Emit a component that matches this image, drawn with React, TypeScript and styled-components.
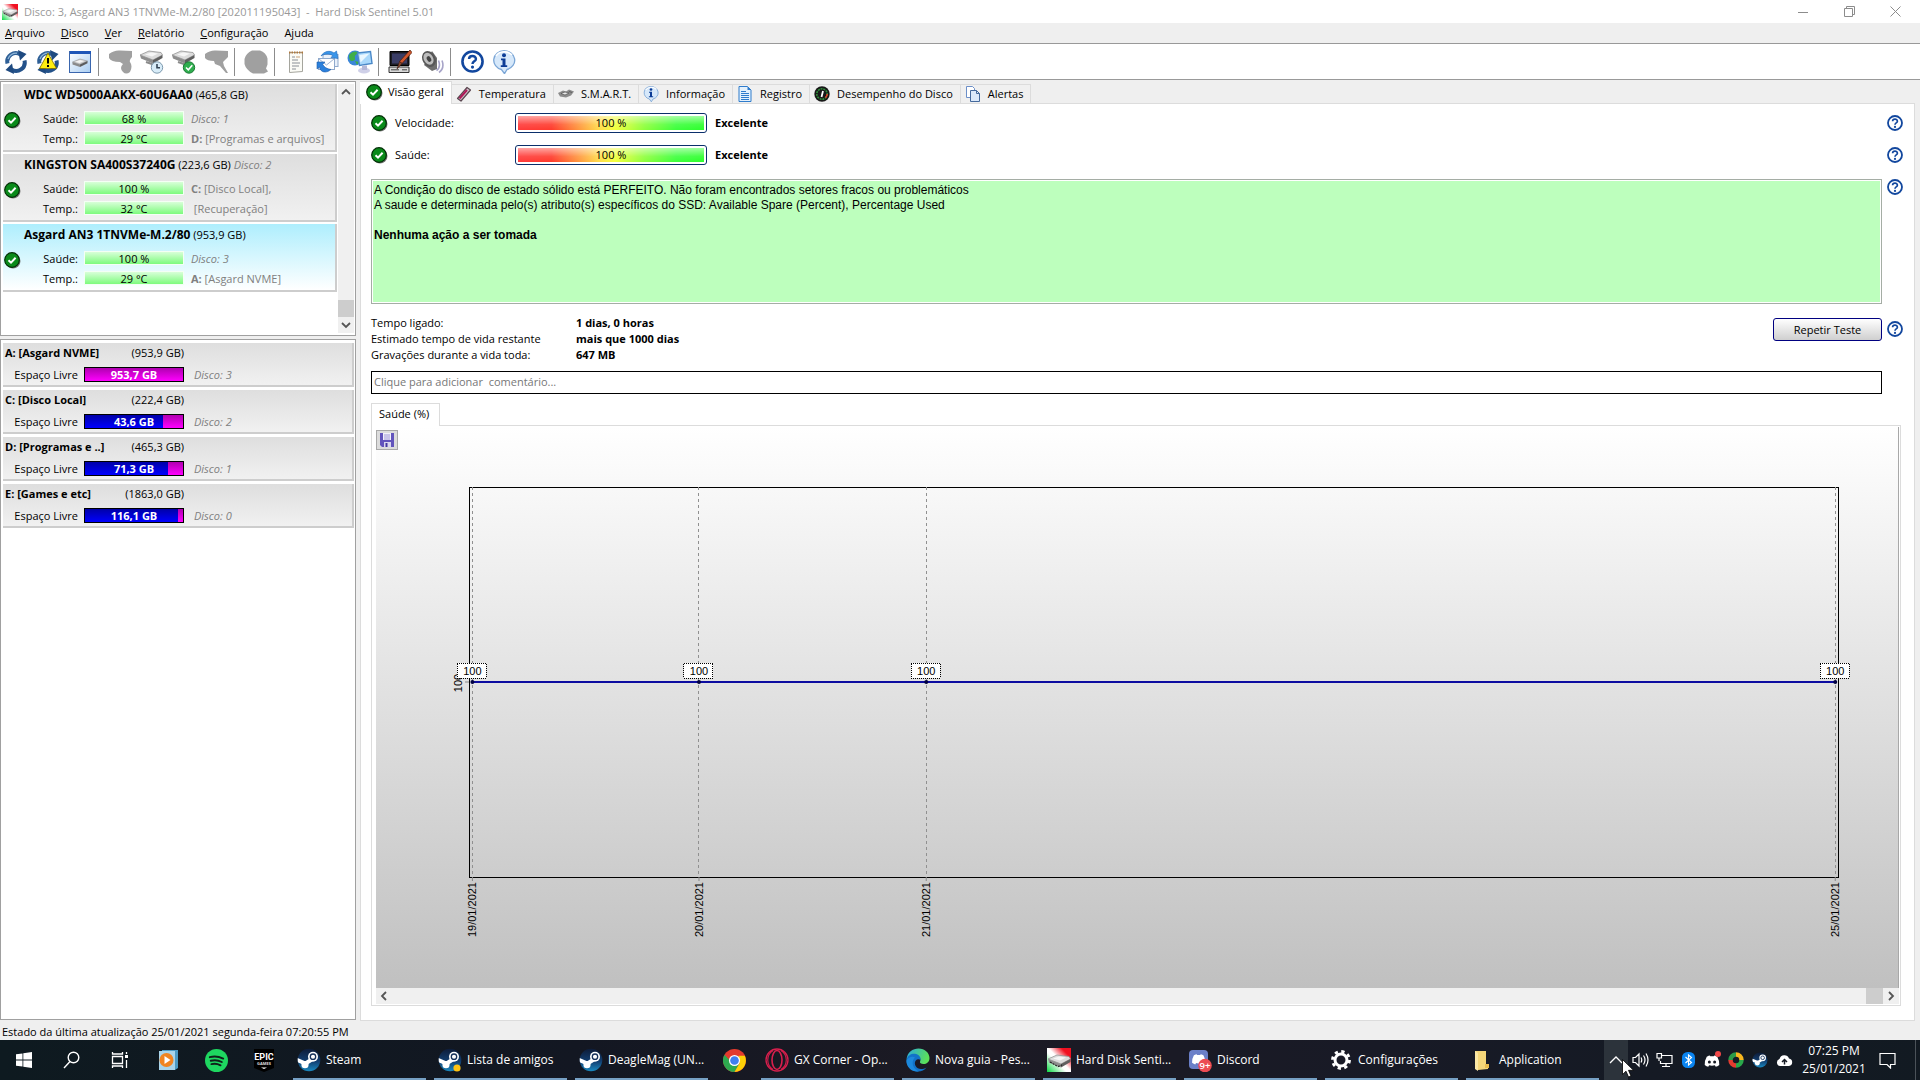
import React from "react";
import styled, { createGlobalStyle, css } from "styled-components";

const ui = `"Segoe UI", "Open Sans", "Noto Sans", sans-serif`;
const arial = `Arial, "Liberation Sans", sans-serif`;

const Global = createGlobalStyle`
  *, *::before, *::after { box-sizing: border-box; }
  body { margin: 0; background: #efefef; }
  button, input { font: inherit; color: inherit; }
  svg { display: block; flex: none; }
`;

const App_ = styled.div`
  display: flex;
  flex-direction: column;
  min-height: 100vh;
  font: 11px/16px ${ui};
  color: #000;
  background: #efefef;
`;

const plainButton = css`
  border: 0;
  padding: 0;
  background: none;
  display: flex;
  align-items: center;
  justify-content: center;
`;

/* ---------- window chrome ---------- */
const TitleBar = styled.header`
  display: flex;
  align-items: center;
  height: 23px;
  padding: 0 2px;
  gap: 6px;
  background: #fff;
  color: #999;
`;
const Title = styled.h1`
  flex: 1;
  margin: 0;
  font-size: 11px;
  font-weight: 400;
  white-space: pre;
`;
const WinButtons = styled.div`
  display: flex;
`;
const WinButton = styled.button`
  ${plainButton}
  width: 46px;
  height: 22px;
  color: #8c8c8c;
`;
const MenuBar = styled.nav`
  display: flex;
  align-items: center;
  height: 21px;
  gap: 16px;
  padding-left: 5px;
  border-bottom: 1px solid #999;
`;
const MenuItem = styled.button`
  ${plainButton}
  display: block;
`;
const ToolBar = styled.div`
  display: flex;
  align-items: center;
  height: 36px;
  background: #fff;
  border-bottom: 1px solid #999;
`;
const ToolButton = styled.button`
  ${plainButton}
  width: 32px;
  height: 32px;
`;
const ToolSep = styled.span`
  width: 8px;
  height: 28px;
  border-left: 1px solid #8c8c8c;
  margin-left: 2px;
  margin-right: -2px;
`;

/* ---------- body ---------- */
const Body = styled.div`
  flex: 1;
  display: flex;
  padding: 1px 5px 0 0;
  gap: 4px;
`;
const Side = styled.aside`
  width: 356px;
  flex: none;
  display: flex;
  flex-direction: column;
  gap: 3px;
  padding-bottom: 1px;
`;
const DiskBox = styled.section`
  display: flex;
  gap: 1px;
  height: 255px;
  padding: 2px 1px 2px 2px;
  background: #fff;
  border: 1px solid #a0a0a0;
`;
const DiskItems = styled.div`
  flex: 1;
  display: flex;
  flex-direction: column;
  gap: 2px;
`;
const Disk = styled.article<{ $selected?: boolean }>`
  display: grid;
  grid-template-columns: 21px 60px 100px 1fr;
  grid-template-rows: 20px 16px 16px;
  row-gap: 4px;
  height: 68px;
  padding-top: 3px;
  border: solid #cdcdcd;
  border-width: 0 2px 2px 0;
  background: ${(p) =>
    p.$selected
      ? "linear-gradient(#aeeefd, #ffffff)"
      : "linear-gradient(#dedede, #f1f1f1)"};
  white-space: nowrap;
  & > :nth-child(1) { grid-column: 2 / -1; }
  & > :nth-child(2) { grid-column: 1; margin: 1px 0 0 1px; }
`;
const DiskTitle = styled.h2`
  margin: 0;
  font-size: 11px;
  font-weight: 400;
`;
const DiskName = styled.b`
  font-size: 12px;
`;
const Label = styled.span`
  text-align: right;
  padding-right: 6px;
`;
const DiskRows = styled.div`
  display: contents;
`;
const Level = styled.span`
  height: 14px;
  text-align: center;
  border: 1px solid #f4fff4;
  line-height: 14px;
  background: linear-gradient(#d8ffd8, #7dfb7d);
`;
const Aside = styled.span`
  padding-left: 7px;
  color: #808080;
`;
const Dim = styled.i`
  color: #808080;
`;
const VScroll = styled.div`
  width: 16px;
  display: flex;
  flex-direction: column;
  background: #f0f0f0;
`;
const ScrollButton = styled.button`
  ${plainButton}
  width: 16px;
  height: 16px;
  color: #555;
`;
const VTrack = styled.div`
  flex: 1;
  display: flex;
  align-items: flex-end;
`;
const VThumb = styled.div`
  width: 16px;
  height: 17px;
  background: #cdcdcd;
`;
const DriveBox = styled.section`
  flex: 1;
  display: flex;
  flex-direction: column;
  gap: 3px;
  padding: 3px 1px 3px 2px;
  background: #fff;
  border: 1px solid #a0a0a0;
`;
const Drive = styled.article`
  height: 44px;
  padding: 2px 0 0 2px;
  border: solid #cdcdcd;
  border-width: 0 2px 2px 0;
  background: linear-gradient(#dedede, #f1f1f1);
  white-space: nowrap;
`;
const DriveHead = styled.h2`
  display: flex;
  justify-content: space-between;
  width: 179px;
  margin: 0 0 6px;
  font-size: 11px;
  font-weight: 400;
`;
const DriveRow = styled.div`
  display: grid;
  grid-template-columns: 79px 100px 1fr;
`;
const DriveBar = styled.span`
  display: flex;
  position: relative;
  height: 15px;
  border: 1px solid #000;
  background: linear-gradient(#b000b0, #ff00ff);
`;
const DriveUsed = styled.span`
  background: linear-gradient(#0000a8, #0000ff);
`;
const DriveText = styled.b`
  position: absolute;
  inset: 0;
  text-align: center;
  color: #fff;
  line-height: 14px;
`;
const DriveDisk = styled(Dim)`
  padding-left: 10px;
`;

/* ---------- tabs and page ---------- */
const Main = styled.main`
  flex: 1;
  min-width: 0;
  display: flex;
  flex-direction: column;
`;
const Tabs = styled.div`
  display: flex;
  align-items: flex-end;
  height: 23px;
  margin-bottom: -1px;
  position: relative;
`;
const Tab = styled.button<{ $on?: boolean }>`
  ${plainButton}
  height: ${(p) => (p.$on ? "23px" : "20px")};
  gap: ${(p) => (p.$on ? "5px" : "7px")};
  padding: ${(p) => (p.$on ? "0 7px 2px 6px" : "0 7px 0 4px")};
  border: solid #dcdcdc;
  border-width: 1px 1px ${(p) => (p.$on ? "0" : "1px")} 0;
  background: ${(p) => (p.$on ? "#fff" : "#f0f0f0")};
`;
const Page = styled.div`
  flex: 1;
  display: flex;
  flex-direction: column;
  padding: 3px 11px 14px 10px;
  background: #fff;
  border: 1px solid #dcdcdc;
`;
const HelpLine = styled.div`
  display: grid;
  grid-template-columns: minmax(0, 1fr) 16px;
  column-gap: 5px;
`;
const HelpButton = styled.button`
  ${plainButton}
  width: 16px;
  height: 16px;
`;
const RateLine = styled(HelpLine)`
  align-items: center;
  height: 32px;
`;
const Rate = styled.div`
  display: grid;
  grid-template-columns: 24px 120px 192px 1fr;
  align-items: center;
`;
const RateBar = styled.div`
  height: 20px;
  padding: 2px;
  border: 1px solid #0b2f6b;
  border-radius: 3px;
  text-align: center;
`;
const RateFill = styled.div`
  height: 14px;
  line-height: 14px;
  background:
    linear-gradient(rgba(255, 255, 255, 0.55), rgba(255, 255, 255, 0.1) 60%, rgba(255, 255, 255, 0)),
    linear-gradient(90deg, #ff3a3a, #ff3a2c 18%, #ffd84a 43%, #f4ff3c 52%, #8dff3c 68%, #3cff3c 85%, #2cff2c);
`;
const RateWord = styled.b`
  padding-left: 8px;
`;
const Advice = styled.div`
  height: 125px;
  padding: 3px 2px;
  border: 1px solid #a5ada5;
  box-shadow: inset 0 0 0 1px #fff;
  background: #bdffbd;
  font: 12px/15px ${arial};
  p { margin: 0; }
  p + p { margin-top: 15px; }
`;
const AdviceLine = styled(HelpLine)`
  margin-top: 8px;
`;
const LifeLine = styled(HelpLine)`
  margin-top: 11px;
`;
const Life = styled.div`
  display: flex;
  justify-content: space-between;
`;
const LifeTable = styled.table`
  border-collapse: collapse;
  th, td { padding: 0; text-align: left; line-height: 16px; }
  th { width: 205px; font-weight: 400; }
  td { font-weight: 700; }
`;
const Retest = styled.button`
  width: 109px;
  height: 23px;
  margin-top: 3px;
  padding: 0;
  border: 1px solid #000080;
  border-radius: 3px;
  background: linear-gradient(#fff, #cfcfcf);
`;
const RetestHelp = styled(HelpButton)`
  margin-top: 6px;
`;
const Comment = styled.input`
  height: 23px;
  margin: 8px 21px 0 0;
  padding: 0 2px 2px;
  border: 1px solid #000;
  background: #fff;
  outline: 0;
  &::placeholder { color: #777; opacity: 1; white-space: pre; }
`;
const SubTab = styled.button`
  position: relative;
  align-self: flex-start;
  height: 23px;
  margin: 9px 0 -1px;
  padding: 0 10px 2px 7px;
  border: 1px solid #dcdcdc;
  border-bottom: 0;
  background: #fff;
`;
const Panel = styled.div`
  flex: 1;
  display: flex;
  flex-direction: column;
  margin-right: 2px;
  padding: 1px 1px 1px 4px;
  border: 1px solid #dcdcdc;
`;
const Chart = styled.div`
  flex: 1;
  display: flex;
  flex-direction: column;
  border-right: 1px solid #a8a8a8;
  background: linear-gradient(#ffffff, #c0c0c0);
`;
const Save = styled.button`
  ${plainButton}
  width: 22px;
  height: 20px;
  margin-top: 3px;
  border: 1px solid #a8a8a8;
  background: #dcdcdc;
`;
const Plot = styled.svg`
  flex: 1;
  align-self: stretch;
  margin: 37px 60px 111px 93px;
  overflow: visible;
  font: 11px ${arial};
  svg { overflow: visible; }
`;
const HScroll = styled.div`
  display: flex;
  height: 16px;
  background: #f0f0f0;
`;
const HTrack = styled.div`
  flex: 1;
  display: flex;
  justify-content: flex-end;
`;
const HThumb = styled.div`
  width: 17px;
  background: #cdcdcd;
`;
const Status = styled.footer`
  height: 19px;
  padding: 3px 2px 0;
`;

/* ---------- taskbar ---------- */
const TaskBar = styled.nav`
  display: flex;
  height: 40px;
  padding-right: 4px;
  background: linear-gradient(90deg, #0e1a20, #131722 30%, #1c1a24 50%, #181a26 72%, #121a22);
  color: #fff;
`;
const Pin = styled.button<{ $w?: number }>`
  ${plainButton}
  width: ${(p) => p.$w ?? 48}px;
  height: 40px;
`;
const Pins = styled.div`
  display: flex;
  padding-right: 5px;
`;
const Tasks = styled.div`
  display: flex;
  gap: 8px;
`;
const Task = styled.button`
  ${plainButton}
  justify-content: flex-start;
  gap: 5px;
  width: 133px;
  height: 40px;
  padding: 2px 0 0 4px;
  border-bottom: 2px solid #76a0c4;
  font-size: 12px;
  white-space: nowrap;
`;
const Tray = styled.div`
  display: flex;
  align-items: center;
  margin-left: auto;
`;
const TrayButton = styled.button<{ $hot?: boolean }>`
  ${plainButton}
  position: relative;
  width: 24px;
  height: 40px;
  background: ${(p) => (p.$hot ? "#2c333b" : "none")};
`;
const Cursor = styled.svg`
  position: absolute;
  left: 18px;
  top: 19px;
  z-index: 2;
`;
const Clock = styled.time`
  width: 76px;
  text-align: center;
  font-size: 12px;
  line-height: 18px;
`;
const Notice = styled.button`
  ${plainButton}
  width: 30px;
  height: 40px;
  margin-right: 13px;
`;
const Desktop = styled.span`
  width: 1px;
  height: 40px;
  background: #4b5259;
`;

/* ---------- icons ---------- */
const Check = ({ size = 17 }: { size?: number }) => (
  <svg width={size} height={size} viewBox="0 0 17 17">
    <circle cx="9" cy="9" r="7.5" fill="#777" />
    <circle cx="8" cy="8" r="7.3" fill="#0a8a1a" stroke="#022f06" strokeWidth="1.2" />
    <path d="M4.5 8.2l2.5 2.4 4.6-4.9" fill="none" stroke="#fff" strokeWidth="2" />
  </svg>
);
const Help = ({ size = 16 }: { size?: number }) => (
  <svg width={size} height={size} viewBox="0 0 16 16">
    <circle cx="8" cy="8" r="7" fill="#fff" stroke="#12479e" strokeWidth="1.8" />
    <path d="M5.6 6.3C5.6 3.4 10.4 3.5 10.4 6.2 10.4 7.9 8 7.9 8 9.7" fill="none" stroke="#12479e" strokeWidth="1.7" />
    <circle cx="8" cy="11.9" r="1.1" fill="#12479e" />
  </svg>
);
const Info = ({ size = 24 }: { size?: number }) => (
  <svg width={size} height={size} viewBox="0 0 24 24">
    <path d="M12 .7A10.8 9.6 0 0 1 15 19.5L12.5 23.7 9.5 19.5A10.8 9.6 0 0 1 12 .7z" fill="#d6e8fa" stroke="#7ba6d6" strokeWidth="1.3" />
    <path d="M4 6a9.5 8 0 0 1 16-1" fill="none" stroke="#fff" strokeWidth="1.6" />
    <circle cx="12" cy="5.3" r="2" fill="#0c3c96" />
    <path d="M9 8.600h4.500v6.700h1.700v1.700H8.800v-1.700h1.700v-5H9z" fill="#0c3c96" />
  </svg>
);
const Arrows = ({ warn }: { warn?: boolean }) => (
  <svg width="24" height="24" viewBox="0 0 24 24">
    <path d="M3.5 13.5A8.5 8.5 0 0 1 16.5 4.500" fill="none" stroke="#2e5f96" strokeWidth="4" />
    <path d="M14 0l8.5 4-6.5 6.500z" fill="#1f4a80" />
    <path d="M20.5 10.5A8.5 8.5 0 0 1 7.5 19.500" fill="none" stroke="#24528a" strokeWidth="4" />
    <path d="M10 24l-8.500-4L8 13.500z" fill="#1f4a80" />
    <path d="M4 9A8.500 8.500 0 0 1 13 3.200" fill="none" stroke="#8fb6d8" strokeWidth="1.4" />
    {warn && (
      <>
        <path d="M12 3l8.500 15.500h-17z" fill="#ffee10" stroke="#7a6a00" strokeWidth=".8" />
        <path d="M12 8v5.500M12 15v2" stroke="#000" strokeWidth="2" />
      </>
    )}
  </svg>
);
const Drv = ({ x = 0, y = 0 }) => (
  <g transform={`translate(${x} ${y})`}>
    <path d="M0 5l9-4 12 1.500 1.500 2.500L13 10z" fill="#dcdcdc" stroke="#8a8a8a" strokeWidth=".7" />
    <path d="M0 5l13 5v3.500L1 8.500z" fill="#8e8e8e" />
    <path d="M13 10l9.500-5v3L13 13.500z" fill="#5f5f5f" />
    <path d="M5 4.500l6-2 7 1-6 3z" fill="#f6f6f6" />
  </g>
);
const WindowDrive = () => (
  <svg width="22" height="22" viewBox="0 0 22 22">
    <defs>
      <linearGradient id="wd" x1="0" y1="0" x2="1" y2="1">
        <stop offset="0" stopColor="#ffffff" />
        <stop offset="1" stopColor="#a9cdf2" />
      </linearGradient>
    </defs>
    <rect x=".5" y=".5" width="21" height="21" fill="url(#wd)" stroke="#3a66ae" />
    <rect x="1" y="0" width="21" height="3" fill="#1e56b8" />
    <path d="M3.500 11l7.500-3 7.500 2-7.500 3.500z" fill="#c9c9c9" stroke="#999" strokeWidth=".6" />
    <path d="M6 10.800l5-1.800 4.500 1-5 2z" fill="#f4f4f4" />
    <path d="M3.500 11l7.500 2.500V16l-7.500-2.500z" fill="#8a8a8a" />
    <path d="M11 13.500l7.500-3.500v2.300L11 16z" fill="#5c5c5c" />
  </svg>
);
const DriveTool = ({ kind }: { kind: "clock" | "ok" }) => (
  <svg width="24" height="24" viewBox="0 0 24 24">
    <Drv />
    <path d="M6 12l6 2v3" fill="none" stroke="#8a8a8a" strokeWidth="2" />
    <circle cx="17" cy="17.500" r="5.700" fill={kind === "ok" ? "#2fae4e" : "#d8ecf8"} stroke={kind === "ok" ? "#1c7a36" : "#7c98ac"} />
    <path d={kind === "ok" ? "M14 17.500l2.300 2.300 4-4.500" : "M17 14v3.700h3"} fill="none" stroke={kind === "ok" ? "#fff" : "#345"} strokeWidth="1.600" />
  </svg>
);
const Gray = ({ d }: { d: string }) => (
  <svg width="24" height="24" viewBox="0 0 24 24">
    <path d={d} fill="#a0a0a0" />
  </svg>
);
const Notes = () => (
  <svg width="24" height="24" viewBox="0 0 24 24">
    <path d="M5.500 2.500h13v19l-13 1z" fill="#fbfbf6" stroke="#a5a59d" />
    <path d="M5 2.500h14" stroke="#b0793c" strokeWidth="2" strokeDasharray="1.500 1" />
    <path d="M8 7h3M8 10h6M8 13h8M8 16h7M8 19h4" stroke="#8a8f96" />
    <path d="M12 7h4" stroke="#c9a27a" />
  </svg>
);
const Transfer = () => (
  <svg width="24" height="24" viewBox="0 0 24 24">
    <rect x="7" y="4.500" width="15" height="12" fill="#e8f0fa" stroke="#8fa9cc" />
    <rect x="2.500" y="8.500" width="16" height="11" fill="#fff" stroke="#8fa9cc" />
    <path d="M3 9l7.500 6L18 9" fill="none" stroke="#9fb4d2" />
    <path d="M5 6C8 1 14 0 18 3l2.500-2L22 8.500l-7-1 1.800-1.800C14 3.500 9 3.500 5 6z" fill="#3a96ea" stroke="#1c66b8" strokeWidth=".6" />
    <path d="M1 12h8l-2.300 2.300C8 17 11 19 15 19.500 10 24 4 22 3.500 17L1 19z" fill="#2b80dc" stroke="#1c5aa8" strokeWidth=".6" />
  </svg>
);
const Network = () => (
  <svg width="26" height="24" viewBox="0 0 26 24">
    <circle cx="8" cy="8" r="7.500" fill="#3b86d8" />
    <path d="M2 5c3-4 7-4 9-3-1 3-4 3-3 6s-4 4-5 2-1-3-1-5zM8 11l4 1-2 3z" fill="#3fae49" />
    <path d="M10.500 3l13-1.500 1.500 12-12.500 2z" fill="#a9d8fb" stroke="#4a88c8" strokeWidth="1.400" />
    <path d="M12.500 5l10-1.500-9 9z" fill="#eaf7ff" />
    <ellipse cx="17" cy="20.500" rx="6" ry="3" fill="#cfd0e8" />
    <path d="M15 15.500h5v4.500h-5z" fill="#b4b8d8" />
  </svg>
);
const Computer = () => (
  <svg width="24" height="24" viewBox="0 0 24 24">
    <path d="M2 1.500h19v14H2z" fill="#1d1d24" stroke="#000" />
    <path d="M4 3.500h15v10H4z" fill="#3a3d66" />
    <path d="M1 17h20v5.500H1z" fill="#d7d7d7" stroke="#333" />
    <path d="M3 19.800h8M14 19.800h5" stroke="#444" />
    <path d="M22 0l2 2.500-10 11-2.500-2z" fill="#d0562c" stroke="#4c1d0c" strokeWidth=".7" />
    <path d="M11.500 11.500l2.500 2L9 19z" fill="#8a4a30" stroke="#3a1a10" strokeWidth=".6" />
  </svg>
);
const Speaker = () => (
  <svg width="24" height="24" viewBox="0 0 24 24">
    <path d="M4 15l8 6 5-2V8l-5-7z" fill="#6f6f6f" />
    <ellipse cx="9" cy="9" rx="6.500" ry="8.300" transform="rotate(-30 9 9)" fill="#585858" />
    <ellipse cx="8.500" cy="8.700" rx="4.600" ry="6.300" transform="rotate(-30 8.500 8.700)" fill="#bdbdbd" />
    <ellipse cx="9" cy="9" rx="2" ry="3" transform="rotate(-30 9 9)" fill="#444" />
    <path d="M16.500 20.500c3-2 3.500-6 2-10M19 22.500c4-3 4.500-8 3-12" fill="none" stroke="#a7a4c8" strokeWidth="1.600" />
  </svg>
);
const Hds = ({ w = 24, h = 24, id }: { w?: number; h?: number; id: string }) => (
  <svg width={w} height={h} viewBox="0 0 24 24" preserveAspectRatio="none">
    <defs>
      <linearGradient id={id} x1="1" y1="0" x2="0" y2="1">
        <stop offset="0" stopColor="#f01020" />
        <stop offset=".2" stopColor="#f01020" />
        <stop offset=".48" stopColor="#fff" />
        <stop offset=".58" stopColor="#fff" />
        <stop offset="1" stopColor="#08d840" />
      </linearGradient>
    </defs>
    <rect width="24" height="24" fill={`url(#${id})`} />
    <Drv x={1} y={6} />
    <path d="M3 14l8 4.500 4-1.500" fill="none" stroke="#222" strokeWidth="1.200" strokeDasharray="2 1" />
  </svg>
);
const TabIcon = ({ kind }: { kind: string }) => (
  <svg width="16" height="16" viewBox="0 0 16 16">
    {kind === "temp" && (
      <>
        <path d="M1.500 12.500L11 1.500l3.500 2.500L5 15z" fill="#cfc3cb" stroke="#5a4650" strokeWidth="1.200" strokeLinejoin="round" />
        <path d="M3.500 12.500l7.500-8.500" stroke="#b01858" strokeWidth="2" />
      </>
    )}
    {kind === "smart" && (
      <>
        <path d="M0 7l5-2.500 3 1 3-2 5 2-3 4-5 2-6-1z" fill="#8c8c8c" />
        <path d="M3 7.500l4-1.500 4 1-4 2zM11 5.500l3 1" fill="#e8e8e8" stroke="#444" strokeWidth=".6" />
      </>
    )}
    {kind === "log" && (
      <>
        <path d="M2 .5h8.500L14 4v11.500H2z" fill="#e4f1fd" stroke="#2f7ccc" />
        <path d="M10.500.5V4H14z" fill="#2f7ccc" />
        <path d="M4 5.500h5M4 7.500h8M4 9.500h8M4 11.500h8M4 13.500h8" stroke="#2f7ccc" />
      </>
    )}
    {kind === "perf" && (
      <>
        <circle cx="8" cy="8" r="7.700" fill="#181818" />
        <circle cx="8" cy="8" r="5.200" fill="none" stroke="#2f8f3a" strokeWidth="1.600" strokeDasharray="2 .8" />
        <path d="M11.500 11.700A5.200 5.200 0 0 0 13.200 8" fill="none" stroke="#e03a2a" strokeWidth="1.600" />
        <path d="M7.500 11L9 5" stroke="#fff" strokeWidth="1.800" />
      </>
    )}
    {kind === "alert" && (
      <>
        <path d="M1.500.5h6l2 2v9h-8z" fill="#fff" stroke="#6c8fc8" />
        <path d="M5.500 4.500h6l3 3v8h-9z" fill="#dbe9fa" stroke="#44699c" />
        <path d="M11.500 4.500v3h3" fill="none" stroke="#44699c" />
      </>
    )}
  </svg>
);
const Chevron = ({ d, s = 10 }: { d: string; s?: number }) => (
  <svg width={s} height={s} viewBox="0 0 10 10">
    <path d={d} fill="none" stroke="currentColor" strokeWidth="1.800" />
  </svg>
);
const SteamMark = ({ size = 24, dot, id }: { size?: number; dot?: boolean; id: string }) => (
  <svg width={size} height={size} viewBox="0 0 24 24">
    <defs>
      <linearGradient id={id} x1="0" y1="0" x2="0" y2="1">
        <stop offset="0" stopColor="#0d1a35" />
        <stop offset=".55" stopColor="#123e70" />
        <stop offset="1" stopColor="#1a8fc6" />
      </linearGradient>
      <clipPath id={`${id}c`}>
        <circle cx="12" cy="12" r="11.300" />
      </clipPath>
    </defs>
    <g clipPath={`url(#${id}c)`}>
      <rect width="24" height="24" fill={`url(#${id})`} />
      <path d="M-1 11.500L8.500 15.500 14 12l3-4" fill="none" stroke="#fff" strokeWidth="4" />
      <circle cx="8" cy="16.700" r="3.600" fill="#fff" />
      <circle cx="16" cy="8.700" r="5" fill="#fff" />
      <circle cx="16" cy="8.700" r="2.700" fill="none" stroke="#16315a" strokeWidth="1.300" />
    </g>
    {dot && <circle cx="19" cy="20" r="3.600" fill="#ffc312" />}
  </svg>
);
const DiscordFace = ({ c = "#fff" }) => (
  <path d="M5 5.500Q8 4 9 4l.7 1h4.600l.7-1q1 0 4 1.500 3 5 2.700 11-2.500 2-4.700 2.500l-1.200-2q-3.800 1-7.600 0L7 19q-2.200-.5-4.700-2.500Q2 10.500 5 5.500z" fill={c} />
);

const tasksA: [string, React.ReactNode][] = [
  ["Steam", <SteamMark id="st1" />],
  ["Lista de amigos", <SteamMark id="st2" dot />],
  ["DeagleMag (UN...", <SteamMark id="st3" />],
];
const tasksB: [string, React.ReactNode][] = [
  [
    "GX Corner - Op...",
    <svg width="24" height="24" viewBox="0 0 24 24">
      <g fill="none" stroke="#d81f4d">
        <circle cx="12" cy="12" r="11" strokeWidth="1.300" />
        <ellipse cx="12" cy="12" rx="5" ry="9.500" strokeWidth="1.600" />
        <path d="M8 2.500C1 7 1 17 8 21.500M16 2.500c7 4.500 7 14.500 0 19" strokeWidth="1.100" />
      </g>
    </svg>,
  ],
  [
    "Nova guia - Pes...",
    <svg width="24" height="24" viewBox="0 0 24 24">
      <defs>
        <linearGradient id="ed" x1="0" y1="0" x2="1" y2=".3">
          <stop offset="0" stopColor="#28a8e0" />
          <stop offset="1" stopColor="#5be05a" />
        </linearGradient>
      </defs>
      <path d="M.5 12C1 4 7 .5 12.500.5 19 .5 23.500 5 23.500 10c0 4-3 6-6 6-2.500 0-4-1-3.500-2.200C15 12 14.500 8 10 8 5 8 1 11 .5 12z" fill="url(#ed)" />
      <path d="M.5 12C1.500 7 5.500 5.500 9 5.800c4 .4 6 3.500 5.500 6-4-2-7 2-5 6s7 4 11 1.700C17 24.500 9 25 4.500 20.500 1.500 18 .3 15 .5 12z" fill="#1272c8" />
      <path d="M9 9.500c-4 4-3 11 4 14-8 1-13-5-12.500-11C2.500 8.500 7 8 9 9.500z" fill="#1c88dc" />
    </svg>,
  ],
  ["Hard Disk Senti...", <Hds id="hd2" />],
  [
    "Discord",
    <svg width="24" height="24" viewBox="0 0 24 24">
      <rect x="1" y="2" width="19" height="19" rx="4" fill="#6a7fc8" />
      <g transform="translate(2.500 3.500) scale(.68)"><DiscordFace /></g>
      <circle cx="17" cy="17.500" r="6.800" fill="#ec4b52" />
      <text x="17" y="21" fontSize="9.500" fontWeight="600" textAnchor="middle" fill="#fff">9+</text>
    </svg>,
  ],
  [
    "Configurações",
    <svg width="24" height="24" viewBox="0 0 24 24">
      <circle cx="12" cy="12" r="6" fill="none" stroke="#fff" strokeWidth="3" />
      <circle cx="12" cy="12" r="8.500" fill="none" stroke="#fff" strokeWidth="2.800" strokeDasharray="3.300 3.375" />
    </svg>,
  ],
  [
    "Application",
    <svg width="24" height="24" viewBox="0 0 24 24">
      <path d="M5 3h11v13l2 1v4l-10 1-3-2z" fill="#f5d679" />
      <path d="M5 3l3 2v18l-3-2z" fill="#fbe7a4" />
      <path d="M15 16h4v4h-4z" fill="#e8bb4e" />
    </svg>,
  ],
];

const points = [
  { x: "0.25%", date: "19/01/2021" },
  { x: "16.8%", date: "20/01/2021" },
  { x: "33.4%", date: "21/01/2021" },
  { x: "99.8%", date: "25/01/2021" },
];

const disks = [
  { name: "WDC WD5000AAKX-60U6AA0", size: "465,8 GB", health: "68 %", temp: "29 °C", a: <Dim>Disco: 1</Dim>, b: <><b>D:</b> [Programas e arquivos]</> },
  { name: "KINGSTON SA400S37240G", size: "223,6 GB", extra: "Disco: 2", health: "100 %", temp: "32 °C", a: <><b>C:</b> [Disco Local],</>, b: <>&nbsp;[Recuperação]</> },
  { name: "Asgard AN3 1TNVMe-M.2/80", size: "953,9 GB", health: "100 %", temp: "29 °C", a: <Dim>Disco: 3</Dim>, b: <><b>A:</b> [Asgard NVME]</>, selected: true },
];
const drives = [
  { name: "A: [Asgard NVME]", size: "953,9 GB", free: "953,7 GB", used: 0, disk: 3 },
  { name: "C: [Disco Local]", size: "222,4 GB", free: "43,6 GB", used: 80, disk: 2 },
  { name: "D: [Programas e ..]", size: "465,3 GB", free: "71,3 GB", used: 85, disk: 1 },
  { name: "E: [Games e etc]", size: "1863,0 GB", free: "116,1 GB", used: 95, disk: 0 },
];

export default function App() {
  return (
    <App_>
      <Global />
      <TitleBar>
        <Hds w={16} h={16} id="hd1" />
        <Title>{"Disco: 3, Asgard AN3 1TNVMe-M.2/80 [202011195043]  -  Hard Disk Sentinel 5.01"}</Title>
        <WinButtons>
          <WinButton aria-label="Minimizar"><svg width="10" height="10"><path d="M0 5.500h10" stroke="currentColor" /></svg></WinButton>
          <WinButton aria-label="Restaurar"><svg width="11" height="11" fill="none" stroke="currentColor"><path d="M.5 2.500h8v8h-8zM2.500 2V.5h8v8H9" /></svg></WinButton>
          <WinButton aria-label="Fechar"><svg width="11" height="11"><path d="M.5.5l10 10M10.500.5l-10 10" stroke="currentColor" /></svg></WinButton>
        </WinButtons>
      </TitleBar>
      <MenuBar>
        {["Arquivo", "Disco", "Ver", "Relatório", "Configuração"].map((m) => (
          <MenuItem key={m}><u>{m[0]}</u>{m.slice(1)}</MenuItem>
        ))}
        <MenuItem>A<u>j</u>uda</MenuItem>
      </MenuBar>
      <ToolBar>
        <ToolButton aria-label="Atualizar"><Arrows /></ToolButton>
        <ToolButton aria-label="Atualizar alertas"><Arrows warn /></ToolButton>
        <ToolButton aria-label="Discos"><WindowDrive /></ToolButton>
        <ToolSep />
        <ToolButton aria-label="Teste" disabled><Gray d="M1 4q5-4 11-3.500l12 .5v6q-3 3-2 5 3 4 0 10-4 3-7 0-4-4 0-8l-3-2Q3 12 1 8z" /></ToolButton>
        <ToolButton aria-label="Teste curto"><DriveTool kind="clock" /></ToolButton>
        <ToolButton aria-label="Teste completo"><DriveTool kind="ok" /></ToolButton>
        <ToolButton aria-label="Reparar" disabled><Gray d="M1 4q5-4 11-3.500l12 .5v6l-5 5 1 4 4 7h-2l-6-7-5-2-1-3Q3 11 1 8z" /></ToolButton>
        <ToolSep />
        <ToolButton aria-label="Superfície" disabled><Gray d="M8 .5h8q6 2 7.500 8v6l-1.500 4 2 3-4 2H9Q2 20 .5 14V9Q2 3 8 .5z" /></ToolButton>
        <ToolSep />
        <ToolButton aria-label="Relatório"><Notes /></ToolButton>
        <ToolButton aria-label="Enviar"><Transfer /></ToolButton>
        <ToolButton aria-label="Rede"><Network /></ToolButton>
        <ToolSep />
        <ToolButton aria-label="Configuração"><Computer /></ToolButton>
        <ToolButton aria-label="Som"><Speaker /></ToolButton>
        <ToolSep />
        <ToolButton aria-label="Ajuda"><Help size={23} /></ToolButton>
        <ToolButton aria-label="Sobre"><Info /></ToolButton>
      </ToolBar>

      <Body>
        <Side>
          <DiskBox>
            <DiskItems>
              {disks.map((d) => (
                <Disk key={d.name} $selected={d.selected}>
                  <DiskTitle>
                    <DiskName>{d.name}</DiskName> ({d.size}) {d.extra && <Dim>{d.extra}</Dim>}
                  </DiskTitle>
                  <Check />
                  <DiskRows>
                    <Label>Saúde:</Label>
                    <Level>{d.health}</Level>
                    <Aside>{d.a}</Aside>
                    <span />
                    <Label>Temp.:</Label>
                    <Level>{d.temp}</Level>
                    <Aside>{d.b}</Aside>
                  </DiskRows>
                </Disk>
              ))}
            </DiskItems>
            <VScroll>
              <ScrollButton aria-label="Subir"><Chevron d="M1 7l4-4 4 4" /></ScrollButton>
              <VTrack><VThumb /></VTrack>
              <ScrollButton aria-label="Descer"><Chevron d="M1 3l4 4 4-4" /></ScrollButton>
            </VScroll>
          </DiskBox>
          <DriveBox>
            {drives.map((d) => (
              <Drive key={d.name}>
                <DriveHead><b>{d.name}</b><span>({d.size})</span></DriveHead>
                <DriveRow>
                  <Label>Espaço Livre</Label>
                  <DriveBar>
                    <DriveUsed style={{ width: `${d.used}%` }} />
                    <DriveText>{d.free}</DriveText>
                  </DriveBar>
                  <DriveDisk>Disco: {d.disk}</DriveDisk>
                </DriveRow>
              </Drive>
            ))}
          </DriveBox>
        </Side>

        <Main>
          <Tabs role="tablist">
            <Tab role="tab" $on aria-selected><Check />Visão geral</Tab>
            <Tab role="tab"><TabIcon kind="temp" />Temperatura</Tab>
            <Tab role="tab"><TabIcon kind="smart" />S.M.A.R.T.</Tab>
            <Tab role="tab"><Info size={16} />Informação</Tab>
            <Tab role="tab"><TabIcon kind="log" />Registro</Tab>
            <Tab role="tab"><TabIcon kind="perf" />Desempenho do Disco</Tab>
            <Tab role="tab"><TabIcon kind="alert" />Alertas</Tab>
          </Tabs>
          <Page>
            {["Velocidade:", "Saúde:"].map((l) => (
              <RateLine key={l}>
                <Rate>
                  <Check />
                  <span>{l}</span>
                  <RateBar><RateFill>100 %</RateFill></RateBar>
                  <RateWord>Excelente</RateWord>
                </Rate>
                <HelpButton aria-label="Ajuda"><Help /></HelpButton>
              </RateLine>
            ))}
            <AdviceLine>
              <Advice>
                <p>
                  A Condição do disco de estado sólido está PERFEITO. Não foram encontrados setores fracos ou problemáticos
                  <br />
                  A saude e determinada pelo(s) atributo(s) específicos do SSD: Available Spare (Percent), Percentage Used
                </p>
                <p><b>Nenhuma ação a ser tomada</b></p>
              </Advice>
              <HelpButton aria-label="Ajuda"><Help /></HelpButton>
            </AdviceLine>
            <LifeLine>
              <Life>
                <LifeTable>
                  <tbody>
                    <tr><th scope="row">Tempo ligado:</th><td>1 dias, 0 horas</td></tr>
                    <tr><th scope="row">Estimado tempo de vida restante</th><td>mais que 1000 dias</td></tr>
                    <tr><th scope="row">Gravações durante a vida toda:</th><td>647 MB</td></tr>
                  </tbody>
                </LifeTable>
                <Retest>Repetir Teste</Retest>
              </Life>
              <RetestHelp aria-label="Ajuda"><Help /></RetestHelp>
            </LifeLine>
            <Comment aria-label="Comentário" placeholder="Clique para adicionar  comentário..." />
            <SubTab role="tab" aria-selected>Saúde (%)</SubTab>
            <Panel>
              <Chart>
                <Save aria-label="Salvar">
                  <svg width="16" height="16" viewBox="0 0 16 16">
                    <path d="M1 1h14v14H3l-2-2z" fill="#6254bc" />
                    <path d="M4 1h8v7H4z" fill="#f2f0fb" />
                    <path d="M5 3h6M5 5h6M5 7h6" stroke="#8c80cf" strokeWidth=".8" />
                    <path d="M5 10h7v5H5z" fill="#d9d6ee" />
                    <path d="M6.500 11h2v4h-2z" fill="#4438a0" />
                  </svg>
                </Save>
                <Plot role="img" aria-label="Saúde (%)">
                  <rect width="100%" height="100%" fill="none" stroke="#000" shapeRendering="crispEdges" />
                  <svg y="50%">
                    <text transform="translate(-7 1) rotate(-90)" textAnchor="middle">100</text>
                    <path d="M-4 0h4" stroke="#888" />
                  </svg>
                  {points.map((p) => (
                    <svg key={p.date} x={p.x} height="100%">
                      <line y2="100%" stroke="#909090" strokeDasharray="3 3" shapeRendering="crispEdges" />
                      <svg y="100%">
                        <path d="M0 0v4" stroke="#888" />
                        <text transform="translate(4 5) rotate(-90)" textAnchor="end">{p.date}</text>
                      </svg>
                    </svg>
                  ))}
                  <line x1="0.25%" x2="99.8%" y1="50%" y2="50%" stroke="#0c0ca0" strokeWidth="2" shapeRendering="crispEdges" />
                  {points.map((p) => (
                    <svg key={p.date} x={p.x} y="50%">
                      <circle r="2" fill="#000040" />
                      <rect x="-15" y="-19" width="29" height="15" fill="#fff" stroke="#000" strokeDasharray="1 1" shapeRendering="crispEdges" />
                      <text y="-7" textAnchor="middle">100</text>
                    </svg>
                  ))}
                </Plot>
              </Chart>
              <HScroll>
                <ScrollButton aria-label="Esquerda"><Chevron d="M7 1L3 5l4 4" /></ScrollButton>
                <HTrack><HThumb /></HTrack>
                <ScrollButton aria-label="Direita"><Chevron d="M3 1l4 4-4 4" /></ScrollButton>
              </HScroll>
            </Panel>
          </Page>
        </Main>
      </Body>
      <Status>Estado da última atualização 25/01/2021 segunda-feira 07:20:55 PM</Status>

      <TaskBar>
        <Pins>
          <Pin aria-label="Iniciar">
            <svg width="16" height="16" viewBox="0 0 16 16" fill="#fff"><path d="M0 2.300l6.500-.9v6.200H0zM7.300 1.300L16 0v7.600H7.300zM0 8.400h6.500v6.200L0 13.700zM7.300 8.400H16V16l-8.700-1.300z" /></svg>
          </Pin>
          <Pin aria-label="Pesquisar">
            <svg width="18" height="18" viewBox="0 0 18 18" fill="none" stroke="#fff" strokeWidth="1.400"><circle cx="10.500" cy="6.500" r="5.300" /><path d="M7 10.500L1 17" /></svg>
          </Pin>
          <Pin aria-label="Visão de tarefas">
            <svg width="18" height="18" viewBox="0 0 18 18" fill="none" stroke="#fff" strokeWidth="1.300"><path d="M1.500 5.500h10v7h-10zM1.500 1v2h10V1M1.500 17v-2h10v2M15.500 1v2M15.500 9v8" /><path d="M14 4h3v3h-3z" fill="#fff" stroke="none" /></svg>
          </Pin>
          <Pin aria-label="Media Player">
            <svg width="22" height="22" viewBox="0 0 22 22"><path d="M5 1h16v18l-3 2H5z" fill="#4b9ac4" /><path d="M2 2h16v19H2z" fill="#a8d4ea" /><circle cx="9.500" cy="11" r="7" fill="#f08420" /><path d="M7.500 7l6 4-6 4z" fill="#fff" /></svg>
          </Pin>
          <Pin aria-label="Spotify">
            <svg width="23" height="23" viewBox="0 0 24 24"><circle cx="12" cy="12" r="12" fill="#1ed760" /><path d="M5 8.500q7-2 14 1.500M6 12.300q6-1.700 11.500 1.300M6.700 15.800q5-1.300 9.500 1.200" fill="none" stroke="#10201a" strokeWidth="2" strokeLinecap="round" /></svg>
          </Pin>
          <Pin aria-label="Epic Games">
            <svg width="20" height="23" viewBox="0 0 20 23"><path d="M0 0h20v19l-10 4-10-4z" fill="#000" /><text x="10" y="11" fontSize="9" fontWeight="700" textAnchor="middle" fontFamily="Roboto, sans-serif" fill="#fff">EPIC</text><text x="10" y="16" fontSize="4" fontWeight="700" textAnchor="middle" fill="#ddd">GAMES</text><path d="M7 18.500h6l-3 1.500z" fill="#fff" /></svg>
          </Pin>
        </Pins>
        <Tasks>
          {tasksA.map(([t, i]) => <Task key={t}>{i}{t}</Task>)}
        </Tasks>
        <Pin aria-label="Chrome" $w={53}>
          <svg width="23" height="23" viewBox="0 0 24 24"><circle cx="12" cy="12" r="12" fill="#e33b2e" /><path d="M1.600 6A12 12 0 0 0 12 24l5-9-5 2z" fill="#2da94f" /><path d="M22.800 7A12 12 0 0 1 12 24l5.200-9-1-8z" fill="#fdd007" /><circle cx="12" cy="12" r="5.800" fill="#fff" /><circle cx="12" cy="12" r="4.500" fill="#3f7ff0" /></svg>
        </Pin>
        <Tasks>
          {tasksB.map(([t, i]) => <Task key={t}>{i}{t}</Task>)}
        </Tasks>
        <Tray>
          <TrayButton $hot aria-label="Ícones ocultos">
            <svg width="14" height="8" viewBox="0 0 14 8"><path d="M1 7l6-6 6 6" fill="none" stroke="#fff" strokeWidth="1.300" /></svg>
            <Cursor width="12" height="19" viewBox="0 0 12 19"><path d="M.5.5v15l3.500-3.300 2.500 5.800 2.500-1-2.500-5.700h5z" fill="#fff" stroke="#000" strokeWidth=".8" /></Cursor>
          </TrayButton>
          <TrayButton aria-label="Volume">
            <svg width="17" height="16" viewBox="0 0 17 16" fill="none" stroke="#fff" strokeWidth="1.200"><path d="M1 5.500h2.500L7 2v12l-3.500-3.500H1zM9 5.500q1.500 2.500 0 5M11.500 3.500q3 4.500 0 9M14 1.500q4 6.500 0 13" /></svg>
          </TrayButton>
          <TrayButton aria-label="Rede">
            <svg width="17" height="16" viewBox="0 0 17 16" fill="none" stroke="#fff" strokeWidth="1.200"><path d="M6 3.500h10v8H4.500V9M6 14.500h8M10 11.500v3M1 1.500h4.500V6H1zM3 6v3" /></svg>
          </TrayButton>
          <TrayButton aria-label="Bluetooth">
            <svg width="13" height="16" viewBox="0 0 13 16"><rect width="13" height="16" rx="5.500" fill="#0a84f0" /><path d="M3.500 5l6 5.500L6.500 13V3l3 2.500-6 5.500" fill="none" stroke="#fff" strokeWidth="1.100" /></svg>
          </TrayButton>
          <TrayButton aria-label="Discord">
            <svg width="18" height="18" viewBox="0 0 24 24"><g transform="translate(0 2)"><DiscordFace /><circle cx="8.500" cy="12.500" r="2" fill="#161b24" /><circle cx="15.500" cy="12.500" r="2" fill="#161b24" /></g><circle cx="20" cy="4" r="4" fill="#f04747" /></svg>
          </TrayButton>
          <TrayButton aria-label="Cores">
            <svg width="16" height="16" viewBox="0 0 16 16" fill="none" strokeWidth="4.500"><path d="M8 2.500A5.500 5.500 0 0 1 13.500 8" stroke="#f6b61e" /><path d="M13.500 8A5.500 5.500 0 0 1 8 13.500" stroke="#2aa84a" /><path d="M8 13.500A5.500 5.500 0 0 1 2.500 8" stroke="#e43c30" /><path d="M2.500 8A5.500 5.500 0 0 1 8 2.500" stroke="#2b9a48" /></svg>
          </TrayButton>
          <TrayButton aria-label="Steam"><SteamMark size={16} id="st4" /></TrayButton>
          <TrayButton aria-label="Nuvem">
            <svg width="17" height="13" viewBox="0 0 17 13"><path d="M4 12a3.600 3.600 0 0 1-.5-7A5 5 0 0 1 13 4.500 3.800 3.800 0 0 1 13 12z" fill="#fff" /><path d="M8.500 10.500V6M6 8l2.500-2.500L11 8" fill="none" stroke="#161b24" strokeWidth="1.500" /></svg>
          </TrayButton>
          <Clock>07:25 PM<br />25/01/2021</Clock>
          <Notice aria-label="Notificações">
            <svg width="17" height="17" viewBox="0 0 17 17"><path d="M1 1.500h15v11h-4.500v3.500L8 12.500H1z" fill="none" stroke="#fff" strokeWidth="1.200" /></svg>
          </Notice>
          <Desktop />
        </Tray>
      </TaskBar>
    </App_>
  );
}
